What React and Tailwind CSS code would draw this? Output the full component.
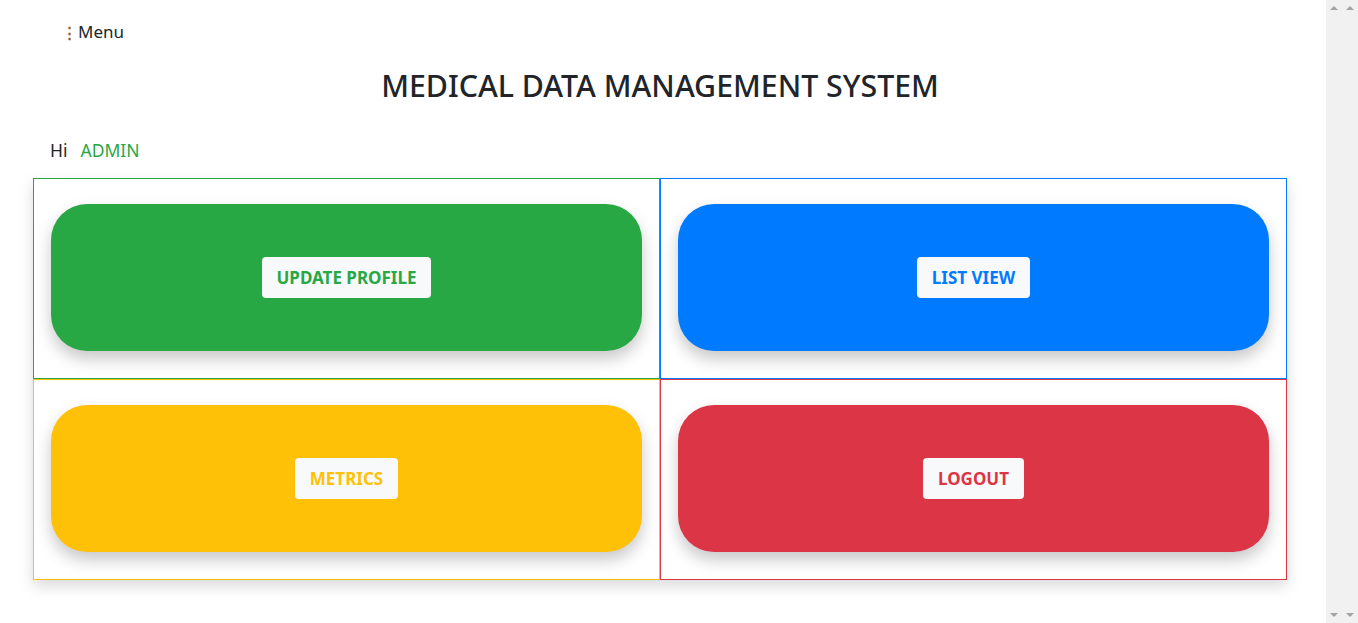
import React from 'react';

const tiles = [
  { label: 'UPDATE PROFILE', border: 'border-[#28a745]', bg: 'bg-[#28a745]', text: 'text-[#28a745]' },
  { label: 'LIST VIEW', border: 'border-[#007bff]', bg: 'bg-[#007bff]', text: 'text-[#007bff]' },
  { label: 'METRICS', border: 'border-[#ffc107]', bg: 'bg-[#ffc107]', text: 'text-[#ffc107]' },
  { label: 'LOGOUT', border: 'border-[#dc3545]', bg: 'bg-[#dc3545]', text: 'text-[#dc3545]' },
];

function Tile({ label, border, bg, text }) {
  return (
    <div className={`border ${border} px-[17px] pt-[25px] pb-[27px]`}>
      <div
        className={`${bg} h-[147px] rounded-[36px] flex items-center justify-center shadow-[0_8px_16px_rgba(0,0,0,0.22)]`}
      >
        <button
          type="button"
          className={`bg-[#f8f9fa] ${text} font-bold text-[17px] leading-[27px] px-[15px] py-[7px] rounded-[4px]`}
        >
          {label}
        </button>
      </div>
    </div>
  );
}

// fake classic scrollbar strip (two nested ones in the screenshot)
function ScrollStrip() {
  return (
    <div className="w-[16px] bg-[#f1f1f1] flex flex-col justify-between items-center py-[6px]">
      <div className="w-0 h-0 border-l-[4px] border-r-[4px] border-b-[4px] border-l-transparent border-r-transparent border-b-[#a3a3a3]" />
      <div className="w-0 h-0 border-l-[4px] border-r-[4px] border-t-[4px] border-l-transparent border-r-transparent border-t-[#a3a3a3]" />
    </div>
  );
}

export default function App() {
  return (
    <div className="h-screen flex bg-white overflow-hidden">
      <div
        className="flex-1 text-[#212529]"
        style={{ fontFamily: '"Noto Sans", "Open Sans", sans-serif' }}
      >
        <div className="pl-[62px] pt-[19px] text-[17px] leading-[26px] flex items-center">
          <span className="text-[15px] font-bold text-[#8a5a2b] mr-[1px]">⋮</span>
          <span>Menu</span>
        </div>

        <div className="w-[1254px] ml-[33px]">
          <h1 className="text-center text-[30.3px] leading-[40px] font-medium mt-[21px]">
            MEDICAL DATA MANAGEMENT SYSTEM
          </h1>

          <div className="mt-[31px] pl-[17px] text-[17.5px] leading-[26px]">
            <span>Hi</span>
            <span className="ml-[13px] text-[#28a745]">ADMIN</span>
          </div>

          <div className="mt-[15px] grid grid-cols-2 shadow-[0_6px_14px_rgba(0,0,0,0.15)]">
            {tiles.map((t) => (
              <Tile key={t.label} {...t} />
            ))}
          </div>
        </div>
      </div>
      <ScrollStrip />
      <ScrollStrip />
    </div>
  );
}
